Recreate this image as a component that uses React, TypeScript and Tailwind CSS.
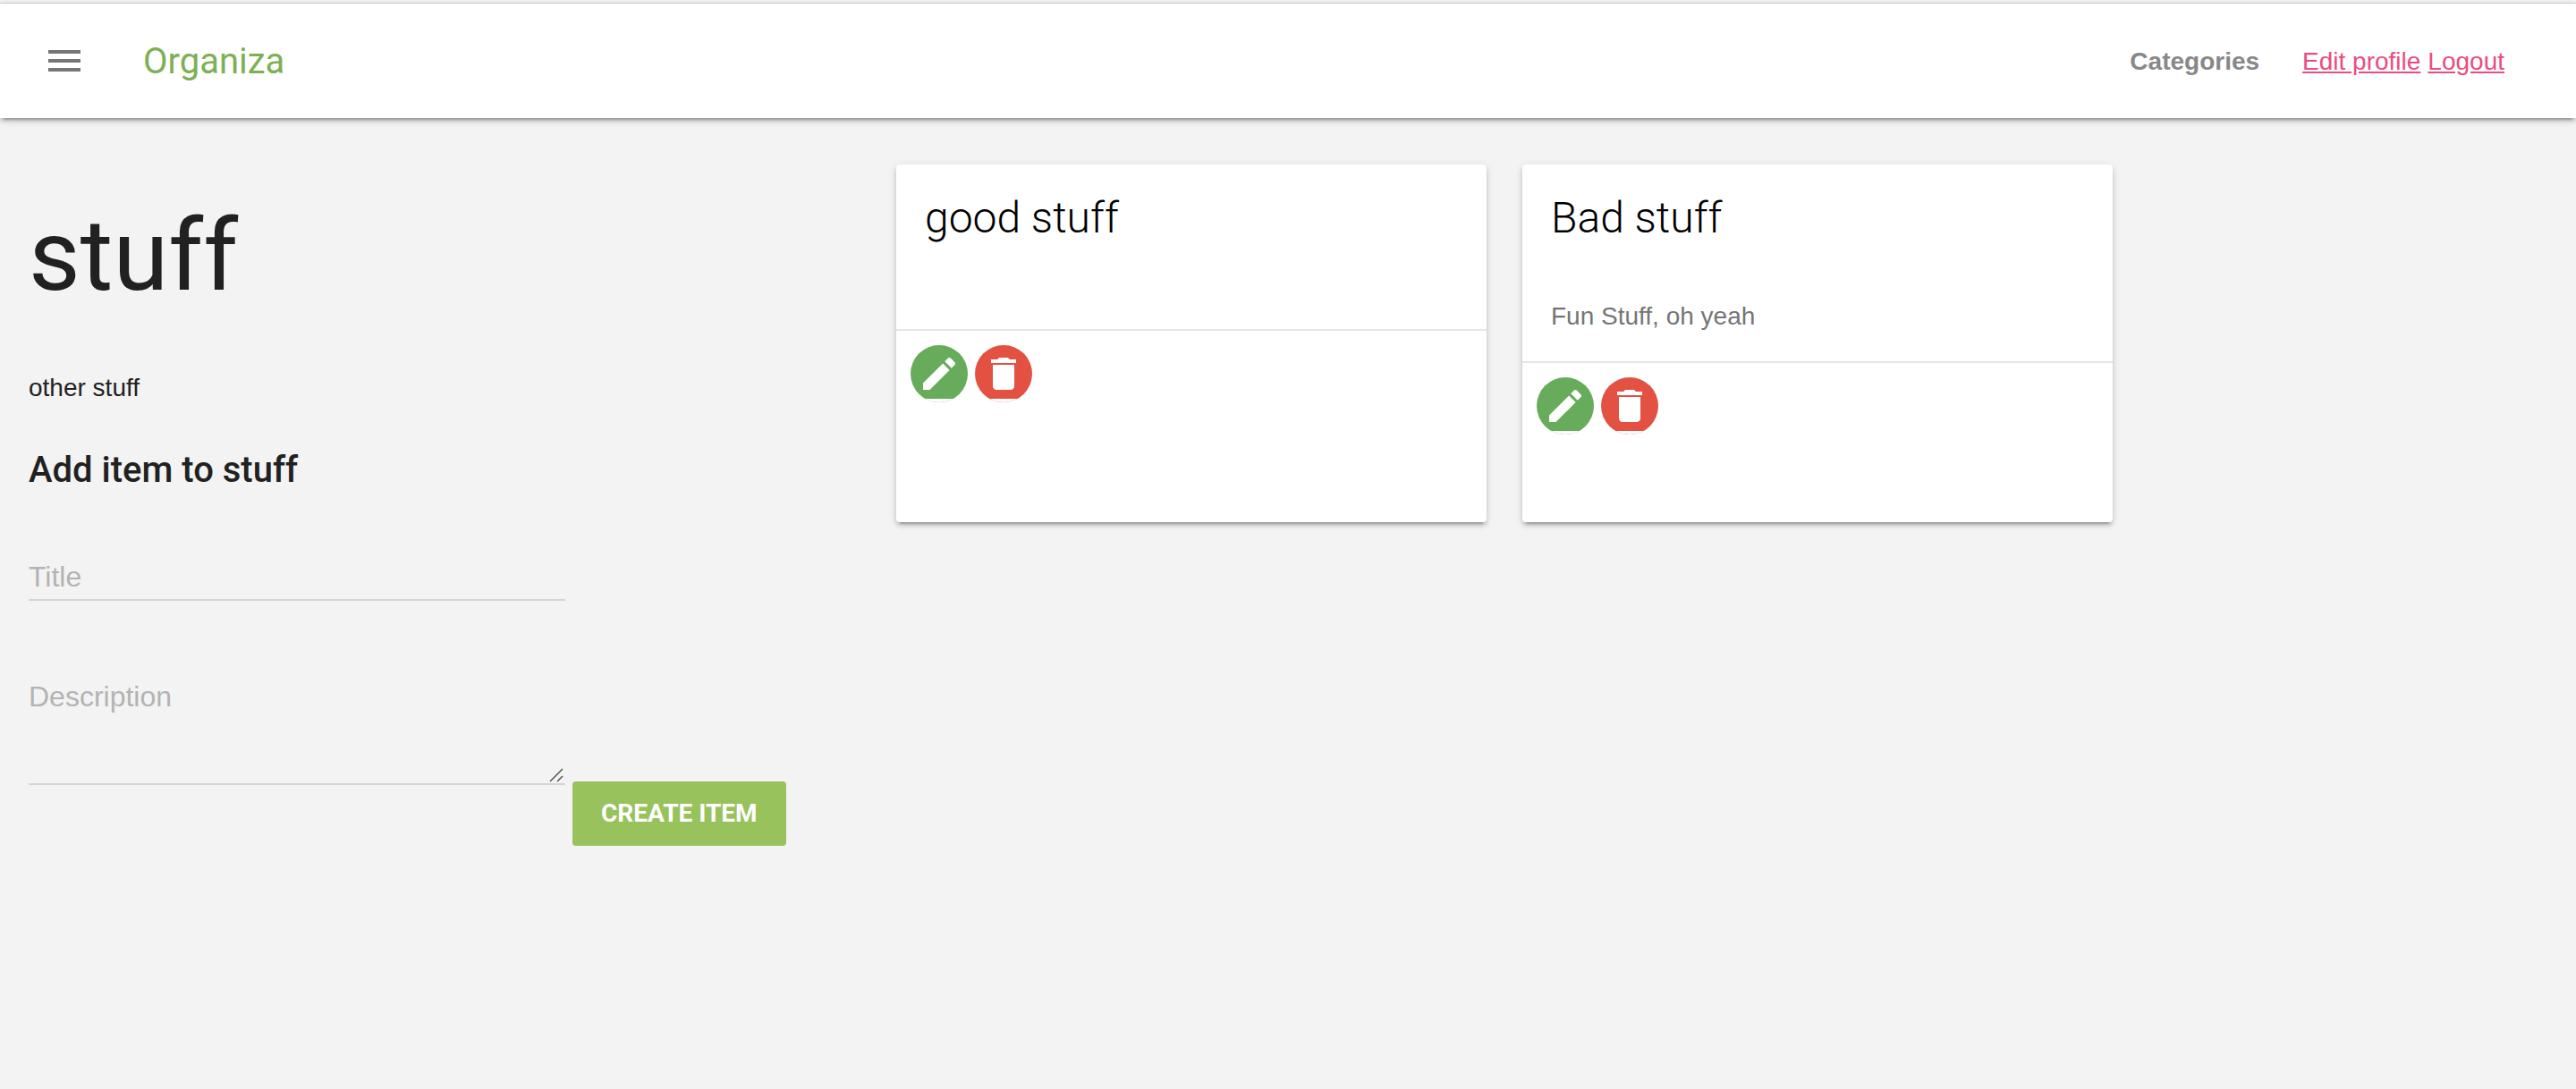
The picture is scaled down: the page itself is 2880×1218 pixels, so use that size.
const roboto = "font-['Roboto','Liberation_Sans',sans-serif]";

type Item = { title: string; description?: string };

const items: Item[] = [
  { title: "good stuff" },
  { title: "Bad stuff", description: "Fun Stuff, oh yeah" },
];

function Icon({ d }: { d: string }) {
  return (
    <svg viewBox="0 0 24 24" className="block size-12" fill="currentColor" aria-hidden="true">
      <path d={d} />
    </svg>
  );
}

const MENU = "M3 18h18v-2H3v2zm0-5h18v-2H3v2zm0-7v2h18V6H3z";
const EDIT =
  "M3 17.25V21h3.75L17.81 9.94l-3.75-3.75L3 17.25zM20.71 7.04c.39-.39.39-1.02 0-1.41l-2.34-2.34c-.39-.39-1.02-.39-1.41 0l-1.83 1.83 3.75 3.75 1.83-1.83z";
const TRASH =
  "M6 19c0 1.1.9 2 2 2h8c1.1 0 2-.9 2-2V7H6v12zM19 4h-3.5l-1-1h-5l-1 1H5v2h14V4z";

function RoundButton({ label, d, color }: { label: string; d: string; color: string }) {
  return (
    <button
      type="button"
      aria-label={label}
      className={`flex size-16 flex-col items-center justify-between overflow-hidden rounded-full pt-2 text-white ${color}`}
    >
      <Icon d={d} />
      <span className="h-1 w-full bg-white" />
    </button>
  );
}

function Card({ item }: { item: Item }) {
  return (
    <article className="flex min-h-[400px] w-[660px] flex-col rounded-[4px] bg-white shadow-[0_4px_4px_0_rgba(0,0,0,0.14),0_6px_2px_-4px_rgba(0,0,0,0.2),0_2px_10px_0_rgba(0,0,0,0.12)]">
      <h3 className={`p-8 text-[48px] leading-[56px] font-light text-black ${roboto}`}>
        {item.title}
      </h3>
      <p className="min-h-16 px-8 pt-8 pb-8 text-[28px] leading-9 text-[#757575]">
        {item.description}
      </p>
      <div className="flex gap-2 border-t-2 border-[#e5e5e5] p-4">
        <RoundButton label={`Edit ${item.title}`} d={EDIT} color="bg-[#67ac5b]" />
        <RoundButton label={`Delete ${item.title}`} d={TRASH} color="bg-[#e25141]" />
      </div>
    </article>
  );
}

export default function App() {
  return (
    <div className="min-h-screen bg-[#f3f3f3] font-['Liberation_Sans',Arial,sans-serif] text-[28px] text-[#212121]">
      <div className="h-1 border-b border-[#d0d0d0] bg-[#f2f2f2]" />
      <header className="flex h-32 items-center bg-white px-12 pr-20 shadow-[0_4px_4px_0_rgba(0,0,0,0.14),0_6px_2px_-4px_rgba(0,0,0,0.2),0_2px_10px_0_rgba(0,0,0,0.12)]">
        <button type="button" aria-label="Menu" className="text-[#757575]">
          <Icon d={MENU} />
        </button>
        <span className={`ml-16 pt-0.5 text-[40px] leading-none text-[#7db054] ${roboto}`}>
          Organiza
        </span>
        <nav className="ml-auto flex items-center pt-0.5 text-[28px]">
          <a href="#categories" className="mr-12 font-bold text-[#888888]">
            Categories
          </a>
          <a href="#profile" className="mr-2 text-[#eb4c7f] underline">
            Edit profile
          </a>
          <a href="#logout" className="text-[#eb4c7f] underline">
            Logout
          </a>
        </nav>
      </header>

      <main className="flex items-start">
        <section className="w-[1002px] shrink-0 px-8 pt-[98px]">
          <h1 className={`text-[112px] leading-[112px] ${roboto}`}>stuff</h1>
          <p className="mt-[68px] leading-[48px]">other stuff</p>
          <h2 className={`mt-9 text-[40px] leading-[64px] font-medium ${roboto}`}>
            Add item to stuff
          </h2>
          <form onSubmit={(e) => e.preventDefault()}>
            <div className="pt-16">
              <input
                type="text"
                aria-label="Title"
                placeholder="Title"
                className="block h-[50px] w-[600px] border-b-2 border-[#d5d5d5] bg-transparent pb-0.5 text-[32px] placeholder:text-[#b3b3b3] placeholder:opacity-100 outline-none"
              />
            </div>
            <div className="mt-20 flex items-end gap-2">
              <div className="relative w-[600px] pb-[68px]">
                <textarea
                  aria-label="Description"
                  placeholder="Description"
                  className="block h-[126px] w-full resize-none border-b-2 border-[#d5d5d5] bg-transparent pt-2 text-[32px] leading-[38px] placeholder:text-[#b3b3b3] placeholder:opacity-100 outline-none"
                />
                <svg
                  viewBox="0 0 16 16"
                  className="absolute right-0.5 bottom-[71px] size-4"
                  stroke="#555555"
                  strokeWidth="1.5"
                  aria-hidden="true"
                >
                  <path d="M1 15 15 1M9 15l6-6" />
                </svg>
              </div>
              <button
                type="submit"
                className={`h-[72px] rounded-[4px] bg-[#98c25c] px-8 text-[28px] font-bold text-white ${roboto}`}
              >
                CREATE ITEM
              </button>
            </div>
          </form>
        </section>

        <section className="flex flex-wrap items-start gap-10 pt-[52px]">
          {items.map((item) => (
            <Card key={item.title} item={item} />
          ))}
        </section>
      </main>
    </div>
  );
}
